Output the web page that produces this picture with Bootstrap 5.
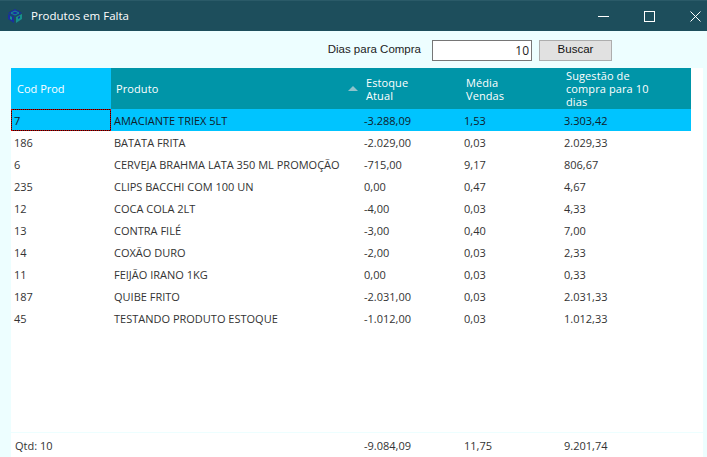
<!DOCTYPE html>
<html lang="pt">
<head>
<meta charset="utf-8">
<title>Produtos em Falta</title>
<link rel="stylesheet" href="https://cdn.jsdelivr.net/npm/bootstrap@5.3.0/dist/css/bootstrap.min.css">
<style>
html,body{height:457px;overflow:hidden}
body{background:#edfeff;font-family:"Open Sans","Liberation Sans",sans-serif;font-size:11px;color:#222}
.win-title{height:31px;background:#1d4e5c;border-top:1px solid #2a5a68;color:#fff;padding-left:7px;font-size:11.5px}
.win-controls{margin-left:auto;margin-right:-11px}
.win-btn{width:46px;height:30px}
.search-bar{height:37px;padding-right:95px;padding-top:1px}
.search-label{font-family:"Liberation Sans",sans-serif;font-size:11.5px;color:#222}
.search-input{width:100px;height:21px;border:1px solid #767676;border-radius:0;background:#fff;text-align:right;font-size:12px;padding:0 2px;margin:0 7px 0 11px;color:#222}
.search-btn{width:73px;height:21px;background:#e1e1e1;border:1px solid #adadad;border-radius:0;font-family:"Liberation Sans",sans-serif;font-size:11.5px;padding:0;color:#111}
.grid-panel{margin-left:11px;margin-right:4px;height:364px;background:#fff;overflow:hidden}
.data-grid{table-layout:fixed;width:680px;margin:0;border-collapse:collapse}
.data-grid th{height:41px;background:#0095a8;color:#fff;font-weight:400;padding:0 5px;line-height:13px;letter-spacing:.1px;vertical-align:middle;border:0;position:relative}
.data-grid th.sorted-col{background:#00c4ff;padding-left:6px;letter-spacing:0}
.data-grid td{height:22px;padding:1px 3px 0;border:0;background:transparent;color:#333;white-space:nowrap;vertical-align:middle;line-height:14px}
.data-grid tr.picked td{background:#00c4ff;color:#10202a}
.data-grid tr.picked td.cur{outline:1px dotted #c00;outline-offset:-1px;box-shadow:inset 0 0 0 1px #111}
.sort-arrow{position:absolute;left:237px;top:18px;width:0;height:0;border-left:5px solid transparent;border-right:5px solid transparent;border-bottom:5px solid #8fc3cc}
.foot-bar{margin:1px 4px 0 11px;height:24px;background:#fff;color:#333;padding-top:2px}
.fc1{width:350px;padding-left:4px}.fc3{width:100px;padding-left:3px}.fc4{padding-left:3px}
</style>
</head>
<body>
<div class="win-title d-flex align-items-center">
  <svg width="16" height="16" viewBox="0 0 16 16" class="me-1 flex-shrink-0">
    <path d="M8 1L15 5L8 8L1 5Z" fill="#1a2ea0"/>
    <path d="M1 6L7 9V15L1 11Z" fill="#1a2ea0"/>
    <path d="M9 9L15 6V11L9 15Z" fill="#17908c"/>
    <path d="M4 5L8 3L12 5L8 7Z" fill="none" stroke="#17908c"/>
    <path d="M3 8L5 9V12L3 11Z" fill="#17908c"/>
    <path d="M11 9L13 8V10L11 11Z" fill="#1a2ea0"/>
  </svg>
  <span class="ms-1">Produtos em Falta</span>
  <div class="win-controls d-flex">
    <div class="win-btn d-flex align-items-center justify-content-center"><svg width="11" height="11" viewBox="0 0 11 11"><path d="M0 5.5H11" stroke="#fff"/></svg></div>
    <div class="win-btn d-flex align-items-center justify-content-center"><svg width="11" height="11" viewBox="0 0 11 11"><rect x=".5" y=".5" width="10" height="10" fill="none" stroke="#fff"/></svg></div>
    <div class="win-btn d-flex align-items-center justify-content-center"><svg width="11" height="11" viewBox="0 0 11 11"><path d="M.5 .5L10.5 10.5M10.5 .5L.5 10.5" stroke="#fff"/></svg></div>
  </div>
</div>
<div class="search-bar d-flex align-items-center justify-content-end">
  <label class="search-label" for="dias">Dias para Compra</label>
  <input id="dias" class="search-input" value="10">
  <button class="search-btn btn">Buscar</button>
</div>
<div class="grid-panel">
  <table class="data-grid table">
    <colgroup><col style="width:100px"><col style="width:250px"><col style="width:100px"><col style="width:100px"><col style="width:130px"></colgroup>
    <thead><tr>
      <th class="sorted-col">Cod Prod</th>
      <th>Produto<span class="sort-arrow"></span></th>
      <th>Estoque<br>Atual</th>
      <th>Média<br>Vendas</th>
      <th>Sugestão de<br>compra para 10<br>dias</th>
    </tr></thead>
    <tbody>
      <tr class="picked"><td class="cur">7</td><td>AMACIANTE TRIEX 5LT</td><td>-3.288,09</td><td>1,53</td><td>3.303,42</td></tr>
      <tr><td>186</td><td>BATATA FRITA</td><td>-2.029,00</td><td>0,03</td><td>2.029,33</td></tr>
      <tr><td>6</td><td>CERVEJA BRAHMA LATA 350 ML PROMOÇÃO</td><td>-715,00</td><td>9,17</td><td>806,67</td></tr>
      <tr><td>235</td><td>CLIPS BACCHI COM 100 UN</td><td>0,00</td><td>0,47</td><td>4,67</td></tr>
      <tr><td>12</td><td>COCA COLA 2LT</td><td>-4,00</td><td>0,03</td><td>4,33</td></tr>
      <tr><td>13</td><td>CONTRA FILÉ</td><td>-3,00</td><td>0,40</td><td>7,00</td></tr>
      <tr><td>14</td><td>COXÃO DURO</td><td>-2,00</td><td>0,03</td><td>2,33</td></tr>
      <tr><td>11</td><td>FEIJÃO IRANO 1KG</td><td>0,00</td><td>0,03</td><td>0,33</td></tr>
      <tr><td>187</td><td>QUIBE FRITO</td><td>-2.031,00</td><td>0,03</td><td>2.031,33</td></tr>
      <tr><td>45</td><td>TESTANDO PRODUTO ESTOQUE</td><td>-1.012,00</td><td>0,03</td><td>1.012,33</td></tr>
    </tbody>
  </table>
</div>
<div class="foot-bar d-flex align-items-center">
  <div class="fc1">Qtd: 10</div>
  <div class="fc3">-9.084,09</div>
  <div class="fc3">11,75</div>
  <div class="fc4">9.201,74</div>
</div>
</body>
</html>
